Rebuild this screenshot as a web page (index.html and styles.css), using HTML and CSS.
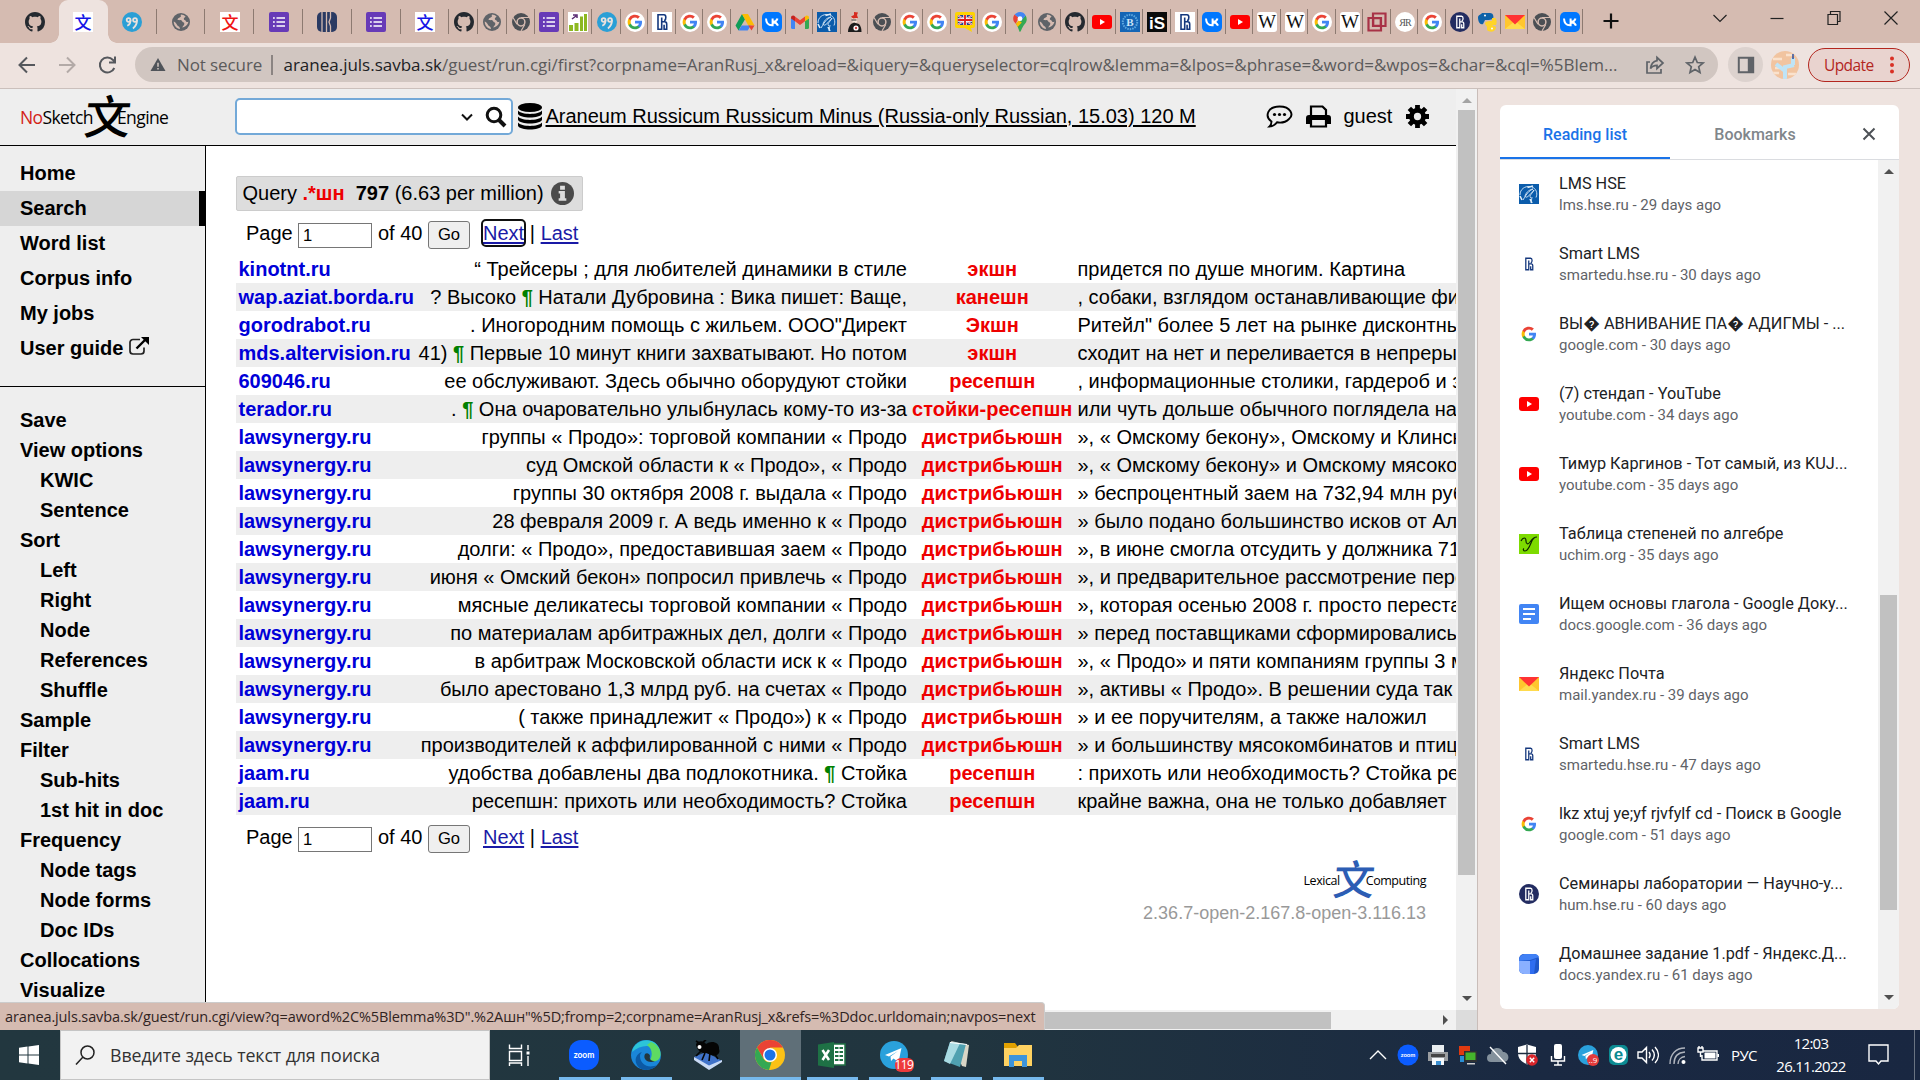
FILE: index.html
```html
<!DOCTYPE html>
<html lang="en">
<head>
<meta charset="utf-8">
<title>Concordance</title>
<link rel="stylesheet" href="styles.css">
</head>
<body>
<svg class="sprite" aria-hidden="true">
  <symbol id="github" viewBox="0 0 16 16"><path fill="#24292f" d="M8 0C3.58 0 0 3.58 0 8c0 3.54 2.29 6.53 5.47 7.59.4.07.55-.17.55-.38 0-.19-.01-.82-.01-1.49-2.01.37-2.53-.49-2.69-.94-.09-.23-.48-.94-.82-1.13-.28-.15-.68-.52-.01-.53.63-.01 1.08.58 1.23.82.72 1.21 1.87.87 2.33.66.07-.52.28-.87.51-1.07-1.78-.2-3.64-.89-3.64-3.95 0-.87.31-1.59.82-2.15-.08-.2-.36-1.02.08-2.12 0 0 .67-.21 2.2.82.64-.18 1.32-.27 2-.27s1.36.09 2 .27c1.53-1.04 2.2-.82 2.2-.82.44 1.1.16 1.92.08 2.12.51.56.82 1.27.82 2.15 0 3.07-1.87 3.75-3.65 3.95.29.25.54.73.54 1.48 0 1.07-.01 1.93-.01 2.2 0 .21.15.46.55.38A8.01 8.01 0 0 0 16 8c0-4.42-3.58-8-8-8z"/></symbol>
  <symbol id="wenblue" viewBox="0 0 20 20"><rect width="20" height="20" fill="#fff"/><text x="10" y="16.5" text-anchor="middle" class="cjk" font-size="17" fill="#1414e6">文</text></symbol>
  <symbol id="wenred" viewBox="0 0 20 20"><rect width="20" height="20" fill="#fff"/><text x="10" y="16.5" text-anchor="middle" class="cjk" font-size="17" fill="#f01414">文</text></symbol>
  <symbol id="quote" viewBox="0 0 20 20"><circle cx="10" cy="10" r="10" fill="#2a9fd6"/><g fill="none" stroke="#e9e1dd" stroke-width="1.8"><circle cx="6.6" cy="8" r="1.9"/><path d="M8.5 8c.2 3-.8 4.6-3.2 5.7"/><circle cx="13" cy="8" r="1.9"/><path d="M14.900 8c.2 4-1.200 6.400-4 8.400"/></g></symbol>
  <symbol id="globe" viewBox="0 0 20 20"><circle cx="10" cy="10" r="9" fill="#5f6368"/><path fill="#d5bbb1" d="M10 2.500c-1 1 .8 1.600-.6 2.600-1.600 1.200-3 1.200-2.800 2.900 1.900.4 4.200-.5 4.700 1.600.3 1.200 2.200.5 2 2.300-.2 1.600-1.600 2-2 3.600 3-.4 5.700-2.700 6.100-6-.9 1-2.300.5-2.600-.6-.4-1.200-2.200-.6-2-2.200.2-1.300 1.400-1.300 1.700-2.500A7.500 7.500 0 0 0 10 2.500zM2.700 9.500c0 3.900 2.700 7 6.300 7.600-.2-1.400-.2-2.300-1.600-2.900-2-.8-1.200-3.200-4.700-4.700z"/></symbol>
  <symbol id="form" viewBox="0 0 20 20"><rect width="20" height="20" rx="2" fill="#673ab7"/><path stroke="#fff" stroke-width="1.700" d="M4 6h1.800M4 10h1.800M4 14h1.800M7.500 6H16M7.500 10H16M7.500 14H16"/></symbol>
  <symbol id="navybars" viewBox="0 0 20 20"><rect width="20" height="20" rx="5" fill="#2a3a63"/><path stroke="#d5bbb1" stroke-width="1.300" fill="none" d="M5 0v20M9.500 0v20M13.500 0v6l-1.500 4 1.500 4v6"/></symbol>
  <symbol id="chrome" viewBox="0 0 20 20"><circle cx="10" cy="10" r="9" fill="#4b4f54"/><circle cx="10" cy="10" r="3.900" fill="#4b4f54" stroke="#d5bbb1" stroke-width="1.500"/><path stroke="#d5bbb1" stroke-width="1.200" d="M10 5.500h8M6 12.300 2 5.500M13.800 12.500 10 19"/></symbol>
  <symbol id="greenbars" viewBox="0 0 20 20"><rect width="20" height="20" fill="#fff"/><path fill="#8db821" d="M1 13h4v6H1zM6.500 11h4v8h-4zM12 4.500h3V19h-3zM16 2h3v17h-3z"/><path stroke="#5a2a72" stroke-width="1.500" fill="none" d="M4 7l4-3M5 3h4v3"/></symbol>
  <symbol id="glogo" viewBox="0 0 48 48"><path fill="#4285f4" d="M45.100 24.500c0-1.600-.1-3.100-.4-4.500H24v8.500h11.800a10 10 0 0 1-4.400 6.600v5.500h7.100c4.200-3.800 6.600-9.500 6.600-16.100z"/><path fill="#34a853" d="M24 46c5.900 0 10.900-2 14.500-5.300l-7.100-5.500c-2 1.300-4.500 2.100-7.400 2.100-5.700 0-10.500-3.900-12.300-9H4.300v5.700A22 22 0 0 0 24 46z"/><path fill="#fbbc05" d="M11.700 28.200a13 13 0 0 1 0-8.400v-5.700H4.300a22 22 0 0 0 0 19.800z"/><path fill="#ea4335" d="M24 10.800c3.200 0 6.100 1.100 8.400 3.300l6.300-6.300A22 22 0 0 0 4.300 14.100l7.400 5.700c1.700-5.200 6.600-9 12.300-9z"/></symbol>
  <symbol id="google" viewBox="0 0 20 20"><circle cx="10" cy="10" r="10" fill="#fff"/><use href="#glogo" x="2" y="2" width="16" height="16"/></symbol>
  <symbol id="rmark" viewBox="0 0 20 20"><path fill="none" stroke="currentColor" stroke-width="1.600" d="M6 18V2.800h6c2.300 0 2.500 4.500.3 6.200M9.700 5.500V17.200H6M9.700 9.800h3c1.500 0 2 1 2 2.500v4.900h-2.600v-4.500"/></symbol>
  <symbol id="hse" viewBox="0 0 20 20"><rect width="20" height="20" fill="#fff"/><use href="#rmark" width="20" height="20" color="#14377d"/></symbol>
  <symbol id="hsecircle" viewBox="0 0 20 20"><circle cx="10" cy="10" r="10" fill="#232c61"/><use href="#rmark" x="2" y="2" width="16" height="16" color="#fff"/></symbol>
  <symbol id="drive" viewBox="0 0 20 20"><path fill="#0f9d58" d="M7 2 .5 13.500 3.500 18.500 10 7.200z"/><path fill="#fbbc04" d="M7 2h6l6.500 11.500h-6.200z"/><path fill="#4285f4" d="M6.700 13.500h9l-3 5h-9.200z"/><path fill="#ea4335" d="M13.300 13.500h6.200l-3 5z"/></symbol>
  <symbol id="vk" viewBox="0 0 20 20"><rect width="20" height="20" rx="5" fill="#07f"/><path fill="none" stroke="#fff" stroke-width="2" d="M4 6.500c.2 4.500 2.500 6.800 6 6.800h.6V6.500M15.500 6.500c-.6 2-2.200 3.300-4.500 3.500 2.600.3 4.200 1.600 5 3.700"/></symbol>
  <symbol id="gmail" viewBox="0 0 20 20"><path fill="#4285f4" d="M1 6v9.500A1.500 1.500 0 0 0 2.500 17H5V9z"/><path fill="#34a853" d="M19 6v9.500a1.500 1.500 0 0 1-1.500 1.500H15V9z"/><path fill="#ea4335" d="M5 4.500 10 8.300l5-3.800v4.800l-5 3.800-5-3.800z"/><path fill="#c5221f" d="M1 6C1 3.500 3.500 2.900 5 4.500v4.800L1 6.500z"/><path fill="#fbbc04" d="M19 6c0-2.500-2.500-3.100-4-1.500v4.800l4-2.800z"/></symbol>
  <symbol id="lms" viewBox="0 0 20 20"><rect width="20" height="20" fill="#0b5cab"/><g fill="none" stroke="#dbeaf7"><path stroke-width=".9" d="M1 11C1 5 6 2 11 2.500M13 3c4 1.500 6 6 4 10.500M4 16c4-7 6-9 10-11-5 1-7 4-8 7 1 3 4 0 9-6-1 3-6 6-3 8M13 13l-1 6"/><path stroke-width="1.600" d="M8.500 3.500 14 2M1 12l2 4M11 15l2 4"/></g></symbol>
  <symbol id="figure" viewBox="0 0 20 20"><path fill="#f6e6da" d="M7 6h5v4l-2 2H8z"/><path fill="#d62b1f" d="M6 4.500 9 3V0l4 .5-1 2.500 1 3-5 .5z"/><path stroke="#333" d="M6.500 8h5"/><path fill="#1c1c1c" d="M6 12l3-1.500 5 1.500c2 2 2.500 5 2.500 8H3c0-3 1-6 3-8z"/><circle cx="11" cy="16" r="2.600" fill="#fff"/><circle cx="11" cy="16" r="1.200" fill="#c44"/></symbol>
  <symbol id="uk" viewBox="0 0 20 20"><path fill="#ffd400" d="M2 0h16a2 2 0 0 1 2 2v12a2 2 0 0 1-2 2h-2l1 4-7-4H2a2 2 0 0 1-2-2V2a2 2 0 0 1 2-2z"/><svg x="2.500" y="3" width="15" height="10" viewBox="0 0 15 10"><path fill="#26408f" d="M0 0h15v10H0z"/><path stroke="#fff" stroke-width="1.700" d="M0 0l15 10M15 0 0 10"/><path stroke="#e02020" stroke-width=".7" d="M0 0l15 10M15 0 0 10"/><path stroke="#fff" stroke-width="3.400" d="M7.500 0v10M0 5h15"/><path stroke="#e02020" stroke-width="1.900" d="M7.500 0v10M0 5h15"/></svg></symbol>
  <symbol id="maps" viewBox="0 0 20 20"><path fill="#34a853" d="M10 20c-.8 0-1.500-5-4.200-8.200L15.700 3.500C17.500 7.500 17 9.500 14 13c-2 2.500-3.300 7-4 7z"/><path fill="#fbbc04" d="m5.800 11.800 3-3.300 3 2-4.200 4.500c-.6-1.300-1.200-2.200-1.800-3.200z"/><path fill="#ea4335" d="M3.200 6.800c0-2 .6-3.200 1.500-4.300L8.500 5.700 5.800 11.800C4.200 10 3.200 9 3.200 6.800z"/><path fill="#4285f4" d="M4.700 2.500C8 -1 13.500-.8 15.700 3.500L11.500 8.500 8.500 5.700z"/><circle cx="10" cy="6.700" r="2.400" fill="#fff"/></symbol>
  <symbol id="youtube" viewBox="0 0 20 20"><rect y="3" width="20" height="14" rx="3" fill="#f00"/><path fill="#fff" d="m8 7 5 3-5 3z"/></symbol>
  <symbol id="bblue" viewBox="0 0 20 20"><rect width="20" height="20" fill="#1565b5"/><circle cx="10" cy="10" r="7.200" fill="none" stroke="#5ea8e0" stroke-width="2" stroke-dasharray="1.500 1"/><text x="10" y="14" text-anchor="middle" font-family="Liberation Serif" font-weight="700" font-size="11" fill="#cfe6f8">B</text></symbol>
  <symbol id="is" viewBox="0 0 20 20"><rect width="20" height="20" fill="#0a0a0a"/><text x="10" y="16.500" text-anchor="middle" font-family="Liberation Sans" font-weight="700" font-size="17" fill="#fff">iS</text></symbol>
  <symbol id="wiki" viewBox="0 0 20 20"><rect width="20" height="20" rx="3" fill="#fff"/><text x="10" y="16" text-anchor="middle" textLength="18" lengthAdjust="spacingAndGlyphs" font-family="Liberation Serif" font-size="18" fill="#111">W</text></symbol>
  <symbol id="redsq" viewBox="0 0 20 20"><g fill="none" stroke="#a83246" stroke-width="2.200"><path d="M6 1.500h12.500V14H6zM1.500 6H14v12.500H1.500z"/><path d="M6.500 6.500h7v7h-7z" stroke-width="1.500"/></g></symbol>
  <symbol id="disc" viewBox="0 0 20 20"><circle cx="10" cy="10" r="10" fill="#fff"/><text x="10" y="13.500" text-anchor="middle" font-family="Liberation Serif" font-size="10" fill="#555" letter-spacing="-1">ЯR</text></symbol>
  <symbol id="python" viewBox="0 0 20 20"><path fill="#0f62a8" d="M1 5c1-3 3-2 4-4h8c3 0 4 3 3 6l-4 1H8l-2 4c-3 1-5-2-5-7z"/><path fill="#ffd42a" d="M15 6h3c2 1 2 5 1 7h-4l4 2c0 5-6 6-9 3v-3l-2-3c0-3 3-3 7-3z"/><circle cx="8" cy="3.500" r="1" fill="#fff"/><circle cx="15" cy="16.500" r="1" fill="#fff"/></symbol>
  <symbol id="ymail" viewBox="0 0 20 20"><path fill="#ffc62e" d="M0 3h20v14H0z"/><path fill="#ffdb4d" d="m0 17 10-8 10 8z"/><path fill="#f33" d="M0 3h20l-10 9.500z"/></symbol>
  <symbol id="uchim" viewBox="0 0 20 20"><rect width="20" height="20" fill="#7ddb00"/><path d="M2 7c2-4 5-4 5 0 0 3 2 4 4 1 2-3 4-5 7-5-3 0-5 3-6 6-2 5-4 8-6 8-2 0-2-2-1-2.500" stroke="#0d2600" stroke-width="1.200" fill="none"/></symbol>
  <symbol id="gdoc" viewBox="0 0 20 20"><rect width="20" height="20" rx="2" fill="#4285f4"/><path stroke="#fff" stroke-width="2" d="M4 5h12M4 10h12M4 15h8"/></symbol>
  <symbol id="ydoc" viewBox="0 0 20 20"><rect width="20" height="20" rx="5" fill="#1f57c9"/><path fill="#4080f5" d="M0 7C0 2 3 0 7 0h8c3 0 4 1 5 3l-9 3z"/><path fill="#2f6df0" d="M11 7l6-2-2 15h-4z"/><path fill="#8ab0ff" d="M0 7h11v13H5a5 5 0 0 1-5-5z"/></symbol>
  <symbol id="tgram" viewBox="0 0 28 28"><circle cx="14" cy="14" r="14" fill="#2aa1dc"/><path fill="#fff" d="m5 14 16.500-7-3 14-5-3.500-2.500 2.500-.5-4.500L18 10l-9 5.500z"/></symbol>
</svg>

<div class="tabstrip">
  <div class="tab nosep"><svg><use href="#github"/></svg></div>
  <div class="tab active nosep"><svg><use href="#wenblue"/></svg></div>
  <div class="tab"><svg><use href="#quote"/></svg></div>
  <div class="tab"><svg><use href="#globe"/></svg></div>
  <div class="tab"><svg><use href="#wenred"/></svg></div>
  <div class="tab"><svg><use href="#form"/></svg></div>
  <div class="tab"><svg><use href="#navybars"/></svg></div>
  <div class="tab"><svg><use href="#form"/></svg></div>
  <div class="tab"><svg><use href="#wenblue"/></svg></div>
  <div class="tab mid"><svg><use href="#github"/></svg></div>
  <div class="tab mid"><svg><use href="#globe"/></svg></div>
  <div class="tab mid"><svg><use href="#chrome"/></svg></div>
  <div class="tab mid"><svg><use href="#form"/></svg></div>
  <div class="tab mid"><svg><use href="#greenbars"/></svg></div>
  <div class="tab mid"><svg><use href="#quote"/></svg></div>
  <div class="tab small"><svg><use href="#google"/></svg></div>
  <div class="tab small"><svg><use href="#hse"/></svg></div>
  <div class="tab small"><svg><use href="#google"/></svg></div>
  <div class="tab small"><svg><use href="#google"/></svg></div>
  <div class="tab small"><svg><use href="#drive"/></svg></div>
  <div class="tab small"><svg><use href="#vk"/></svg></div>
  <div class="tab small"><svg><use href="#gmail"/></svg></div>
  <div class="tab small"><svg><use href="#lms"/></svg></div>
  <div class="tab small"><svg><use href="#figure"/></svg></div>
  <div class="tab small"><svg><use href="#chrome"/></svg></div>
  <div class="tab small"><svg><use href="#google"/></svg></div>
  <div class="tab small"><svg><use href="#google"/></svg></div>
  <div class="tab small"><svg><use href="#uk"/></svg></div>
  <div class="tab small"><svg><use href="#google"/></svg></div>
  <div class="tab small"><svg><use href="#maps"/></svg></div>
  <div class="tab small"><svg><use href="#globe"/></svg></div>
  <div class="tab small"><svg><use href="#github"/></svg></div>
  <div class="tab small"><svg><use href="#youtube"/></svg></div>
  <div class="tab small"><svg><use href="#bblue"/></svg></div>
  <div class="tab small"><svg><use href="#is"/></svg></div>
  <div class="tab small"><svg><use href="#hse"/></svg></div>
  <div class="tab small"><svg><use href="#vk"/></svg></div>
  <div class="tab small"><svg><use href="#youtube"/></svg></div>
  <div class="tab small"><svg><use href="#wiki"/></svg></div>
  <div class="tab small"><svg><use href="#wiki"/></svg></div>
  <div class="tab small"><svg><use href="#google"/></svg></div>
  <div class="tab small"><svg><use href="#wiki"/></svg></div>
  <div class="tab small"><svg><use href="#redsq"/></svg></div>
  <div class="tab small"><svg><use href="#disc"/></svg></div>
  <div class="tab small"><svg><use href="#google"/></svg></div>
  <div class="tab small"><svg><use href="#hsecircle"/></svg></div>
  <div class="tab small"><svg><use href="#python"/></svg></div>
  <div class="tab small"><svg><use href="#ymail"/></svg></div>
  <div class="tab small"><svg><use href="#chrome"/></svg></div>
  <div class="tab small"><svg><use href="#vk"/></svg></div>
  <svg class="newtab" viewBox="0 0 16 16"><path d="M8 .5v15M.5 8h15" stroke="#111" stroke-width="2.200"/></svg>
  <div class="winctl">
    <svg viewBox="0 0 16 16"><path d="m1.500 5 6.500 6.500L14.500 5"/></svg>
    <svg viewBox="0 0 16 16"><path d="M1.500 8.500h13"/></svg>
    <svg viewBox="0 0 16 16"><path d="M2 4.500h9.500v10H2zM4.500 4.500v-3H14v10h-2.500"/></svg>
    <svg viewBox="0 0 16 16"><path d="m1.500 1.500 13 13M14.500 1.500l-13 13"/></svg>
  </div>
</div>

<div class="toolbar">
  <svg class="nav" viewBox="0 0 20 20"><path d="M18 10H3M10 2.500 2.500 10l7.500 7.500" stroke="#55585d"/></svg>
  <svg class="nav" viewBox="0 0 20 20"><path d="M2 10h15M10 2.500l7.500 7.500-7.500 7.500" stroke="#b3aaa7"/></svg>
  <svg class="nav" viewBox="0 0 20 20"><path d="M17.300 13A7.500 7.500 0 1 1 16 5l2 2.500M18 1.500v6h-6" stroke="#55585d"/></svg>
  <div class="omnibox">
    <svg class="warn" viewBox="0 0 16 16"><path fill="#50545a" d="M8 1 16 15H0z"/><path stroke="#d1c6c1" stroke-width="1.600" d="M8 6v4.500M8 11.700v1.600"/></svg>
    <span class="notsecure">Not secure</span>
    <i class="obsep"></i>
    <span class="url"><b>aranea.juls.savba.sk</b>/guest/run.cgi/first?corpname=AranRusj_x&amp;reload=&amp;iquery=&amp;queryselector=cqlrow&amp;lemma=&amp;lpos=&amp;phrase=&amp;word=&amp;wpos=&amp;char=&amp;cql=%5Blem...</span>
    <svg class="obicon share" viewBox="0 0 20 20"><path d="M5 7H2v11h14v-4M12 2.500l6 5.500-6 5.500v-3.200c-3 0-5 .8-6.500 3.200.5-4 2.500-7 6.500-7.800z"/></svg>
    <svg class="obicon" viewBox="0 0 20 20"><path d="m10 2.200 2.300 5.300 5.700.5-4.300 3.700 1.300 5.700-5-3-5 3 1.300-5.700L2 8l5.700-.5z"/></svg>
  </div>
  <div class="sidebtn"><svg viewBox="0 0 20 20"><path fill="none" stroke="#5f6368" stroke-width="2.200" d="M2 2h16v16H2z"/><path fill="#5f6368" d="M12 2h6v16h-6z"/></svg></div>
  <svg class="avatar" viewBox="0 0 28 28"><clipPath id="av"><circle cx="14" cy="14" r="14"/></clipPath><g clip-path="url(#av)"><path fill="#f1c4a0" d="M0 0h28v28H0z"/><path d="M2 8h9M4 17h5M15 4h8M17 23h8M1 22h7" stroke="#fae2cd" stroke-width="2.500"/><path fill="none" stroke="#bfe4f6" stroke-width="4" d="M14 28V16l9-2M14 20l-9-7M22 14V7"/><path stroke="#2b4d9a" stroke-width="1.500" d="M22 3v5"/></g></svg>
  <div class="update"><span>Update</span><svg viewBox="0 0 4 18"><g fill="#d93025"><circle cx="2" cy="2.500" r="2"/><circle cx="2" cy="9" r="2"/><circle cx="2" cy="15.500" r="2"/></g></svg></div>
</div>

<div class="content">
  <div class="web">
    <div class="viewport">
      <div class="page">
        <header class="head">
          <div class="logo"><span class="name"><span class="no">No</span>Sketch</span><span class="wen">文</span><span>Engine</span></div>
          <div class="searchbox">
            <svg class="chev" viewBox="0 0 12 8"><path d="m1 1.500 5 5 5-5" fill="none" stroke="#111" stroke-width="2"/></svg>
            <svg class="mag" viewBox="0 0 22 22"><circle cx="9" cy="9" r="6.800" fill="none" stroke="#111" stroke-width="3"/><path d="m14 14 6 6" stroke="#111" stroke-width="4"/></svg>
          </div>
          <svg class="db" viewBox="0 0 24 27"><ellipse cx="12" cy="4.500" rx="12" ry="4.500"/><path d="M0 7.500c3 4.500 21 4.500 24 0v3.200c-2 5-22 5-24 0zM0 13.500c3 4.500 21 4.500 24 0v3.200c-2 5-22 5-24 0zM0 19.500c3 4.500 21 4.500 24 0v3.200c-2 5-22 5-24 0z"/></svg>
          <a class="corpus">Araneum Russicum Russicum Minus (Russia-only Russian, 15.03) 120 M</a>
          <svg class="chat" viewBox="0 0 27 23"><path fill="none" stroke="#000" stroke-width="1.900" d="M5.500 16.500C-2 11 2 1.500 13.500 1.500S28 10 23 14c-3 3-8 4-12 3.300C9 20 6 21.500 3.500 21.500c1.700-1.500 2-3 2-5z"/><circle cx="8.500" cy="9.500" r="1.600"/><circle cx="13.500" cy="9.500" r="1.600"/><circle cx="18.500" cy="9.500" r="1.600"/></svg>
          <svg class="printer" viewBox="0 0 25 23"><path fill="none" stroke="#000" stroke-width="2.200" d="M5 11V1.500h11.500L20 5v6M5 15v6.500h15V15"/><path d="M3 10h19a3 3 0 0 1 3 3v6h-4v-4H4v4H0v-6a3 3 0 0 1 3-3z"/></svg>
          <span class="guest">guest</span>
          <svg class="gear" viewBox="0 0 24 24"><circle cx="12" cy="12" r="6.300" fill="none" stroke="#000" stroke-width="5"/><path stroke="#000" stroke-width="5" d="M12 0v5M12 19v5M0 12h5M19 12h5M3.500 3.500 7 7M17 17l3.500 3.500M20.500 3.500 17 7M7 17l-3.500 3.500"/></svg>
        </header>
        <div class="cols">
          <nav class="side">
            <div class="top">
              <a>Home</a><a class="cur">Search</a><a>Word list</a><a>Corpus info</a><a>My jobs</a>
              <a>User guide <svg viewBox="0 0 20 18"><path fill="none" stroke="#222" stroke-width="1.700" d="M11 2.500H4a3 3 0 0 0-3 3V14a3 3 0 0 0 3 3h8a3 3 0 0 0 3-3v-3.500"/><path stroke="#000" stroke-width="2.400" d="m7.500 11.500 9-9"/><path d="M12 0h8v8z"/></svg></a>
            </div>
            <div class="menu">
              <a>Save</a><a>View options</a><a class="sub">KWIC</a><a class="sub">Sentence</a><a>Sort</a><a class="sub">Left</a><a class="sub">Right</a><a class="sub">Node</a><a class="sub">References</a><a class="sub">Shuffle</a><a>Sample</a><a>Filter</a><a class="sub">Sub-hits</a><a class="sub">1st hit in doc</a><a>Frequency</a><a class="sub">Node tags</a><a class="sub">Node forms</a><a class="sub">Doc IDs</a><a>Collocations</a><a>Visualize</a>
            </div>
          </nav>
          <main>
            <div class="query"><span>Query <b class="red">.*шн</b>&nbsp; <b>797</b> (6.63 per million)</span><svg viewBox="0 0 24 24"><circle cx="12" cy="12" r="12" fill="#4a4a4a"/><path fill="#ddd" d="M9.500 4h5v4h-5zM8 9.500h6.500V17H16v2.500H8V17h1.500v-5H8z"/></svg></div>
            <div class="pager"><span class="pg">Page</span><span class="inp">1</span><span class="of">of 40</span><span class="go">Go</span><a class="focus">Next</a><span class="bar">|</span><a>Last</a></div>
            <div class="rows">
              <div class="row"><b>kinotnt.ru</b><span>“ Трейсеры ; для любителей динамики в стиле</span><strong>экшн</strong><span>придется по душе многим. Картина</span></div>
              <div class="row"><b>wap.aziat.borda.ru</b><span>? Высоко <i>¶</i> Натали Дубровина : Вика пишет: Ваще,</span><strong>канешн</strong><span>, собаки, взглядом останавливающие физ</span></div>
              <div class="row"><b>gorodrabot.ru</b><span>. Иногородним помощь с жильем. ООО"Директ</span><strong>Экшн</strong><span>Ритейл" более 5 лет на рынке дисконтных</span></div>
              <div class="row"><b>mds.altervision.ru</b><span>41) <i>¶</i> Первые 10 минут книги захватывают. Но потом</span><strong>экшн</strong><span>сходит на нет и переливается в непрерыв</span></div>
              <div class="row"><b>609046.ru</b><span>ее обслуживают. Здесь обычно оборудуют стойки</span><strong>ресепшн</strong><span>, информационные столики, гардероб и зо</span></div>
              <div class="row"><b>terador.ru</b><span>. <i>¶</i> Она очаровательно улыбнулась кому-то из-за</span><strong>стойки-ресепшн</strong><span>или чуть дольше обычного поглядела на</span></div>
              <div class="row"><b>lawsynergy.ru</b><span>группы « Продо»: торговой компании « Продо</span><strong>дистрибьюшн</strong><span>», « Омскому бекону», Омскому и Клинско</span></div>
              <div class="row"><b>lawsynergy.ru</b><span>суд Омской области к « Продо», « Продо</span><strong>дистрибьюшн</strong><span>», « Омскому бекону» и Омскому мясоком</span></div>
              <div class="row"><b>lawsynergy.ru</b><span>группы 30 октября 2008 г. выдала « Продо</span><strong>дистрибьюшн</strong><span>» беспроцентный заем на 732,94 млн руб.</span></div>
              <div class="row"><b>lawsynergy.ru</b><span>28 февраля 2009 г. А ведь именно к « Продо</span><strong>дистрибьюшн</strong><span>» было подано большинство исков от Аль</span></div>
              <div class="row"><b>lawsynergy.ru</b><span>долги: « Продо», предоставившая заем « Продо</span><strong>дистрибьюшн</strong><span>», в июне смогла отсудить у должника 71,</span></div>
              <div class="row"><b>lawsynergy.ru</b><span>июня « Омский бекон» попросил привлечь « Продо</span><strong>дистрибьюшн</strong><span>», и предварительное рассмотрение пере</span></div>
              <div class="row"><b>lawsynergy.ru</b><span>мясные деликатесы торговой компании « Продо</span><strong>дистрибьюшн</strong><span>», которая осенью 2008 г. просто перестал</span></div>
              <div class="row"><b>lawsynergy.ru</b><span>по материалам арбитражных дел, долги « Продо</span><strong>дистрибьюшн</strong><span>» перед поставщиками сформировались</span></div>
              <div class="row"><b>lawsynergy.ru</b><span>в арбитраж Московской области иск к « Продо</span><strong>дистрибьюшн</strong><span>», « Продо» и пяти компаниям группы 3 мл</span></div>
              <div class="row"><b>lawsynergy.ru</b><span>было арестовано 1,3 млрд руб. на счетах « Продо</span><strong>дистрибьюшн</strong><span>», активы « Продо». В решении суда так</span></div>
              <div class="row"><b>lawsynergy.ru</b><span>( также принадлежит « Продо») к « Продо</span><strong>дистрибьюшн</strong><span>» и ее поручителям, а также наложил</span></div>
              <div class="row"><b>lawsynergy.ru</b><span>производителей к аффилированной с ними « Продо</span><strong>дистрибьюшн</strong><span>» и большинству мясокомбинатов и птице</span></div>
              <div class="row"><b>jaam.ru</b><span>удобства добавлены два подлокотника. <i>¶</i> Стойка</span><strong>ресепшн</strong><span>: прихоть или необходимость? Стойка рес</span></div>
              <div class="row"><b>jaam.ru</b><span>ресепшн: прихоть или необходимость? Стойка</span><strong>ресепшн</strong><span>крайне важна, она не только добавляет</span></div>
            </div>
            <div class="pager bottom"><span class="pg">Page</span><span class="inp">1</span><span class="of">of 40</span><span class="go">Go</span><a>Next</a><span class="bar">|</span><a>Last</a></div>
            <footer>
              <div class="lex"><span>Lexical</span><span class="wen">文</span><span>Computing</span></div>
              <div class="ver">2.36.7-open-2.167.8-open-3.116.13</div>
            </footer>
          </main>
        </div>
      </div>
      <div class="vscroll"><i class="up dim"></i><i class="thumb"></i><i class="down"></i></div>
    </div>
    <div class="hscroll"><i class="hthumb"></i><i class="right"></i><i class="corner"></i></div>
    <div class="status">aranea.juls.savba.sk/guest/run.cgi/view?q=aword%2C%5Blemma%3D".%2Aшн"%5D;fromp=2;corpname=AranRusj_x&amp;refs=%3Ddoc.urldomain;navpos=next</div>
  </div>

  <aside class="panel">
    <div class="ptabs"><span class="on">Reading list</span><span>Bookmarks</span><svg viewBox="0 0 14 14"><path d="m1.500 1.500 11 11M12.500 1.500l-11 11" stroke="#4d5156" stroke-width="2"/></svg></div>
    <div class="pbody">
      <div class="list">
        <div class="item"><svg><use href="#lms"/></svg><div><p>LMS HSE</p><small>lms.hse.ru - 29 days ago</small></div></div>
        <div class="item"><svg><use href="#rmark" x="2" y="2" width="16" height="16" color="#14377d"/></svg><div><p>Smart LMS</p><small>smartedu.hse.ru - 30 days ago</small></div></div>
        <div class="item"><svg><use href="#google"/></svg><div><p>ВЫ� АВНИВАНИЕ ПА� АДИГМЫ - ...</p><small>google.com - 30 days ago</small></div></div>
        <div class="item"><svg><use href="#youtube"/></svg><div><p>(7) стендап - YouTube</p><small>youtube.com - 34 days ago</small></div></div>
        <div class="item"><svg><use href="#youtube"/></svg><div><p>Тимур Каргинов - Тот самый, из KUJ...</p><small>youtube.com - 35 days ago</small></div></div>
        <div class="item"><svg><use href="#uchim"/></svg><div><p>Таблица степеней по алгебре</p><small>uchim.org - 35 days ago</small></div></div>
        <div class="item"><svg><use href="#gdoc"/></svg><div><p>Ищем основы глагола - Google Доку...</p><small>docs.google.com - 36 days ago</small></div></div>
        <div class="item"><svg><use href="#ymail"/></svg><div><p>Яндекс Почта</p><small>mail.yandex.ru - 39 days ago</small></div></div>
        <div class="item"><svg><use href="#rmark" x="2" y="2" width="16" height="16" color="#14377d"/></svg><div><p>Smart LMS</p><small>smartedu.hse.ru - 47 days ago</small></div></div>
        <div class="item"><svg><use href="#google"/></svg><div><p>lkz xtuj ye;yf rjvfylf cd - Поиск в Google</p><small>google.com - 51 days ago</small></div></div>
        <div class="item"><svg><use href="#hsecircle"/></svg><div><p>Семинары лаборатории — Научно-у...</p><small>hum.hse.ru - 60 days ago</small></div></div>
        <div class="item"><svg><use href="#ydoc"/></svg><div><p>Домашнее задание 1.pdf - Яндекс.Д...</p><small>docs.yandex.ru - 61 days ago</small></div></div>
      </div>
      <div class="pscroll"><i class="up"></i><i class="thumb"></i><i class="down"></i></div>
    </div>
  </aside>
</div>

<div class="taskbar">
  <div class="start"><svg viewBox="0 0 20 20"><path fill="#fff" d="M0 2.800 8.500 1.600v8H0zM9.500 1.500 20 0v9.600H9.500zM0 10.500h8.500v8L0 17.300zM9.500 10.500H20V20L9.500 18.600z"/></svg></div>
  <div class="tsearch"><svg viewBox="0 0 20 20"><circle cx="12.500" cy="7.500" r="6.500" fill="none" stroke="#222" stroke-width="1.500"/><path d="M8 12 1 19.500" stroke="#222" stroke-width="1.500"/></svg><span>Введите здесь текст для поиска</span></div>
  <div class="apps">
    <div class="app none"><svg viewBox="0 0 30 30"><path fill="none" stroke="#fff" stroke-width="1.400" d="M5.500 4.500v4h12v-4M5.500 11.500h12v9h-12zM5.500 26v-3h12v3M24 5v5M24 16v10"/><path fill="#fff" d="M22.500 11.500h3v3h-3z"/></svg></div>
    <div class="app"><svg viewBox="0 0 30 30"><rect width="30" height="30" rx="12" fill="#0b5cff"/><text x="15" y="17.500" text-anchor="middle" font-family="Lato" font-weight="700" font-size="8.500" fill="#fff">zoom</text></svg></div>
    <div class="app"><svg viewBox="0 0 30 30"><circle cx="15" cy="15" r="15" fill="#1a86d9"/><path fill="#2cc4d8" d="M1 12C4-3 27-4 29 12c-7-8-19-8-28 0z"/><path fill="#5edb62" d="M20 2c8 3 12 11 8 17-2 3-8 3-9 1 3-5 2-12-3-15z"/><path fill="#0c59a4" d="M9 16c0 8 8 13 17 9-6 7-17 6-20 0-3-5-1-11 5-13-1 1-2 2-2 4z"/><path fill="#22363f" d="M14 14c2-2 5 0 5 2-1 3 1 5 5 5-5 3-13-1-10-7z"/></svg></div>
    <div class="app none"><svg viewBox="0 0 30 30"><path fill="#3f72c9" d="m1 17 12-5 16 9-12 8z"/><path fill="#c9daf5" d="m1 17 15 8.500L29 20v2l-13 8L1 20z"/><path fill="#050505" d="M3 4c3-4 8-3 10 0 5-4 14-2 13 5 2 5-3 8-8 6l-5-2c-5 1-10-4-10-9z"/><path fill="none" stroke="#050505" stroke-width="1.600" d="m8 11-5 5M12 13l-3 7M17 13l-1 8M21 13l4 6M6 3 3 1M10 2l3-2"/><circle cx="6.500" cy="7" r="2" fill="#fff"/></svg></div>
    <div class="app hot"><svg viewBox="0 0 30 30"><circle cx="15" cy="15" r="15" fill="#fbc116"/><path fill="#ea4335" d="M2 7.500A15 15 0 0 1 28 7.500H15L8.500 18.500z"/><path fill="#34a853" d="M2 7.500 8.500 18.700c2 3.500 5 3.800 8 3.600L14 30A15 15 0 0 1 2 7.500z"/><circle cx="15" cy="15" r="7" fill="#fff"/><circle cx="15" cy="15" r="5.500" fill="#1a73e8"/></svg></div>
    <div class="app"><svg viewBox="0 0 30 30"><path fill="#fff" stroke="#1f7244" stroke-width="1.500" d="M15 4h13v21H15z"/><path stroke="#1f7244" stroke-width="2" d="M18 8h8M18 12h8M18 16h8M18 20h8" stroke-dasharray="3.500 1"/><path fill="#1e7145" d="M1 4.500 17 2v26L1 25.500z"/><path stroke="#fff" stroke-width="2.500" d="m5.500 10 6.500 10M12 10 5.500 20"/></svg></div>
    <div class="app"><svg viewBox="0 0 30 30"><use href="#tgram" x="1" y="1" width="28" height="28"/></svg><em>119</em></div>
    <div class="app"><svg viewBox="0 0 30 30"><path fill="#d9d6c6" d="m10 1 18 4-3 22-4-1z"/><path fill="#4fa0b0" d="m9 2 16 2-6 23-16-6z"/><path fill="#a9dbe3" d="m9 2 10 1.300L9 24l-6-3z"/><path fill="none" stroke="#fff" d="M9 2.500 26 4.500"/></svg></div>
    <div class="app"><svg viewBox="0 0 30 30"><path fill="#e2a100" d="M1 3h11l3 4v4H1z"/><path fill="#ffd261" d="M1 8h12l3-3h13v21H1z"/><path fill="#3d94db" d="M6 15h18v12h-5v-6h-8v6H6z"/></svg></div>
  </div>
  <div class="tray">
    <svg viewBox="0 0 22 22"><path d="m3 15 8-8 8 8" class="w"/></svg>
    <svg viewBox="0 0 22 22"><circle cx="11" cy="11" r="10.500" fill="#0b5cff"/><text x="11" y="13" text-anchor="middle" font-family="Lato" font-weight="700" font-size="6" fill="#fff">zoom</text></svg>
    <svg viewBox="0 0 22 22"><path fill="#e9edf0" d="M5 1h12v8H5z"/><path fill="#9a9da0" d="M1 8h20v9H1z"/><path fill="#444" d="M4 10h14v3H4z"/><path fill="#f5f8fa" d="M5 14h12v7H5z"/><path fill="#3b8fd0" d="M9 17h5v4H9z"/></svg>
    <svg viewBox="0 0 22 22"><path fill="#e03a10" d="M2 2h11v9H2z"/><path fill="#2a8fd6" d="M3 12h5v6H3z"/><path fill="#2d3033" d="M7 7h13v11H7z"/><path fill="#45b52c" d="M8.500 8.500h10V16h-10z"/><path fill="#ccc" d="M10 19h8v1.500h-8z"/></svg>
    <svg viewBox="0 0 22 22"><path fill="#84919c" d="M4 18a4 4 0 0 1 0-8c0-7 10-8 12-2 7 0 7 10 1 10z"/><path d="m3 3 16 17" class="w"/></svg>
    <svg viewBox="0 0 22 22"><path fill="#fff" d="m10 .5 9 2.500v6c0 6-4 9-9 11.500C5 18 1 15 1 9V3z"/><path d="M10 1v19M1 9.500h18" stroke="#1c2c3f" stroke-width="1.300"/><circle cx="15" cy="16" r="5.800" fill="#d9252a"/><path d="m12.800 13.800 4.400 4.400m0-4.400-4.400 4.400" class="w"/></svg>
    <svg viewBox="0 0 22 22"><rect x="7" width="8" height="15" rx="2" fill="#fff"/><path d="M4.500 12v5h13v-5M11 17v4M7 21h8" class="w"/></svg>
    <svg viewBox="0 0 22 22"><use href="#tgram" x="1" y="1" width="20" height="20"/><circle cx="16" cy="16" r="6" fill="#e33b3b"/><text x="16" y="19" text-anchor="middle" font-family="Open Sans" font-size="8" fill="#fff">..9</text></svg>
    <svg viewBox="0 0 22 22"><rect x="2" y="1" width="19" height="20" rx="5" fill="#0c8b93"/><circle cx="11.500" cy="11" r="8" fill="#fff"/><text x="11.500" y="16.300" text-anchor="middle" font-family="Liberation Sans" font-weight="700" font-size="17" fill="#0c8b93">e</text></svg>
    <svg viewBox="0 0 22 22"><path d="M1 8h4l4.500-4.500v15L5 14H1zM12 8c1.500 2 1.500 4 0 6M15 5.500c3 3.500 3 7.500 0 11M18 3c4.500 5 4.500 11 0 16" class="w"/></svg>
    <svg viewBox="0 0 22 22"><path d="M3 20C3 10 9 4 18 4M7 20c0-7 4-11.500 11-12M11 20c0-4 3-7 7-7.500" class="w" opacity=".65"/><circle cx="16.500" cy="18" r="2" fill="#fff"/></svg>
    <svg viewBox="0 0 22 22"><path d="M6 7h14v9H5v-5M1 4h5v4H1zM2 2v2M5 2v2M3.500 8v5M21.500 10v3" class="w"/><path fill="#fff" d="M7.500 8.500h11v6h-11z"/></svg>
    <span class="lang">РУС</span>
    <div class="clock"><span>12:03</span><span>26.11.2022</span></div>
    <svg class="note" viewBox="0 0 22 22"><path d="M1 1h19v16h-7l-2.500 3L8 17H1z" class="w"/></svg>
    <i class="peek"></i>
  </div>
</div>
</body>
</html>
```
FILE: styles.css
```css
* { box-sizing: border-box; }
html, body { margin: 0; height: 100%; overflow: hidden; }
body { width: 1920px; height: 1080px; display: flex; flex-direction: column; background: #eee3df; font-family: "Liberation Sans", Arial, sans-serif; color: #000; }
p { margin: 0; }
svg { display: block; flex: none; }
.sprite { display: none; }
.cjk { font-family: "Noto Sans CJK SC", sans-serif; font-weight: 500; }

/* tab strip */
.tabstrip { height: 43px; flex: none; display: flex; background: #d5bbb1; padding-left: 10.2px; }
.tab { width: 48.8px; flex: none; display: flex; align-items: center; justify-content: center; background: linear-gradient(#8d7a71, #8d7a71) right 9px / 1px 25px no-repeat; }
.tab svg { width: 20px; height: 20px; }
.tab.mid { width: 28.6px; }
.tab.small { width: 27.5px; }
.tab.nosep { background: none; }
.tab.active { background: #eee3df; border-radius: 9px 9px 0 0; position: relative; }
.tab.active::before, .tab.active::after { content: ""; position: absolute; bottom: 0; width: 9px; height: 9px; }
.tab.active::before { left: -9px; background: radial-gradient(circle at 0 0, transparent 8.5px, #eee3df 9px); }
.tab.active::after { right: -9px; background: radial-gradient(circle at 100% 0, transparent 8.5px, #eee3df 9px); }
.newtab { width: 16px; height: 16px; margin: 13px 0 0 20px; }
.winctl { display: flex; gap: 41px; margin: 10px 0 0 93px; }
.winctl svg { width: 16px; height: 16px; fill: none; stroke: #222; stroke-width: 1.2; }

/* toolbar */
.toolbar { height: 46px; flex: none; display: flex; align-items: center; padding: 0 10px 2px 17px; border-bottom: 1px solid #cbc0bc; }
.toolbar .nav { width: 20px; height: 20px; fill: none; stroke-width: 2; margin-right: 20px; }
.omnibox { width: 1583px; height: 35px; margin-left: -2px; border-radius: 18px; background: #d1c6c1; display: flex; align-items: center; padding-left: 15px; font: 17px "Open Sans", "Noto Sans", sans-serif; color: #5b5a5b; white-space: nowrap; }
.warn { width: 16px; height: 15px; margin-right: 11px; }
.notsecure { width: 83px; letter-spacing: -.1px; }
.obsep { width: 1.500px; height: 20px; background: #8b8482; margin: 0 11px 0 11px; }
.url { width: 1350px; letter-spacing: -.012px; }
.url b { font-weight: 400; color: #202124; }
.obicon { width: 20px; height: 20px; fill: none; stroke: #5f6368; stroke-width: 1.700; }
.share { margin: 0 20px 0 11px; }
.sidebtn { width: 35px; height: 35px; border-radius: 50%; background: #dcd2ce; margin-left: 10px; display: flex; align-items: center; justify-content: center; }
.sidebtn svg { width: 18px; height: 18px; }
.avatar { width: 28px; height: 28px; margin: 0 9px 0 8px; }
.update { width: 102px; height: 34px; border: 1.500px solid #b3261e; border-radius: 17px; background: #e9d3cf; display: flex; align-items: center; justify-content: space-between; padding: 0 15px 0 15px; color: #b3261e; font: 15.500px "Open Sans", sans-serif; letter-spacing: -.6px; }
.update svg { width: 4px; height: 18px; }

.content { height: 941px; flex: none; display: flex; }
.web { width: 1478px; flex: none; display: flex; flex-direction: column; border-right: 1px solid #c9bdb9; position: relative; }
.viewport { height: 921px; flex: none; display: flex; }
.page { width: 1456px; flex: none; background: #fff; overflow: hidden; display: flex; flex-direction: column; }

/* scrollbars */
.vscroll, .pscroll { width: 21px; background: #f1f1f1; display: flex; flex-direction: column; align-items: center; }
.up, .down { width: 0; border: 5px solid transparent; flex: none; }
.up { border-bottom-color: #505050; border-top: 0; }
.down { border-top-color: #505050; border-bottom: 0; }
.dim { border-bottom-color: #a3a3a3; }
.thumb { width: 17px; background: #c1c1c1; }
.vscroll .up { margin: 9px 0 7px; }
.vscroll .thumb { height: 765px; }
.vscroll .down { margin-top: 121px; }
.hscroll { height: 20px; background: #f1f1f1; display: flex; align-items: center; }
.hthumb { width: 1331px; height: 17px; background: #c1c1c1; }
.right { border: 5px solid transparent; border-left-color: #505050; border-right: 0; margin: 0 8px 0 112px; }
.corner { flex: 1; height: 20px; background: #dcdcdc; }
.status { position: absolute; left: 0; bottom: 0; width: 1045px; height: 28px; background: #d5bbb1; border-top: 1px solid #ccc; border-right: 1px solid #ccc; border-radius: 0 4px 0 0; padding-left: 5px; font: 14.500px/27px "Open Sans", sans-serif; letter-spacing: -.125px; color: #30231f; white-space: nowrap; }

/* page header */
.head { height: 57px; flex: none; background: #eee; border-bottom: 1px solid #000; display: flex; align-items: center; padding-bottom: 1px; font-size: 20px; }
.logo { width: 215px; padding-left: 20px; display: flex; align-items: center; font: 17.500px "Open Sans", sans-serif; letter-spacing: -.6px; }
.logo .name { width: 72px; }
.logo .no { color: #d32216; }
.logo .wen { font: 500 46px/42px "Noto Sans CJK SC", sans-serif; width: 25px; margin: -6px 0 0 0; text-indent: -7px; transform: skewX(-6deg); }
.searchbox { width: 278px; height: 37px; margin: 0 5px 0 20px; border: 2px solid #73a9d8; border-radius: 5px; background: #fff; display: flex; align-items: center; justify-content: flex-end; padding-right: 4px; }
.chev { width: 12px; height: 8px; margin-right: 12px; }
.mag { width: 22px; height: 22px; }
.db { width: 24px; height: 27px; margin-right: 3.500px; }
.corpus { text-decoration: underline; text-underline-offset: 2px; width: 720px; white-space: nowrap; }
.chat { width: 27px; height: 23px; margin-right: 13px; }
.printer { width: 25px; height: 23px; margin-right: 13px; }
.guest { width: 62px; }
.gear { width: 23px; height: 23px; }

/* left menu */
.cols { flex: 1; display: flex; min-height: 0; }
.side { width: 206px; flex: none; background: #eee; border-right: 1px solid #000; font-size: 20px; font-weight: 700; }
.side a { display: block; padding-left: 20px; white-space: nowrap; }
.top { height: 241px; padding-top: 10px; border-bottom: 1px solid #000; }
.top a { height: 35px; line-height: 35px; }
.top .cur { background: #d6d6d6; border-right: 6px solid #000; }
.top svg { display: inline-block; width: 20px; height: 18px; }
.menu { padding-top: 18px; }
.menu a { height: 30px; line-height: 30px; }
.menu .sub { padding-left: 40px; }

/* concordance */
main { flex: 1; min-width: 0; padding: 30px 0 0 30px; font-size: 20px; }
.query { width: 347px; height: 35px; background: #ddd; border: 1px solid #ccc; border-radius: 2px; display: flex; align-items: center; justify-content: space-between; padding: 0 8px 1px 5.500px; white-space: nowrap; }
.query svg { width: 23px; height: 23px; }
.red { color: #e00; }
.pager { height: 44px; display: flex; align-items: flex-start; padding: 10px 0 0 10px; line-height: 24px; }
.pg { width: 52px; }
.inp { width: 74px; height: 25px; border: 1px solid #767676; background: #fff; margin: 2px 6px 0 0; padding-left: 4px; font-size: 16.600px; line-height: 23px; }
.of { width: 50px; }
.go { width: 42px; height: 28px; border: 1px solid #767676; border-radius: 3px; background: #efefef; text-align: center; font-size: 16.600px; line-height: 26px; margin-right: 13px; }
.pager a { color: #1a1aa6; text-decoration: underline; text-underline-offset: 2px; }
.pager .focus { outline: 2px solid #101010; outline-offset: 0; border-radius: 3px; }
.bar { width: 16.500px; text-align: center; }
.bottom { height: 44px; padding-top: 9.500px; }
.row { height: 28px; line-height: 28px; display: grid; grid-template-columns: 180px 491px 170.500px 1fr; white-space: nowrap; }
.row:nth-child(even) { background: #eee; }
.row b { color: #0000d8; padding-left: 2.500px; }
.row span:nth-child(2) { text-align: right; }
.row strong { text-align: center; color: #e00; }
.row span:last-child { overflow: hidden; }
.row i { font-style: normal; font-weight: 700; color: green; }
footer { width: 1190px; display: flex; flex-direction: column; align-items: flex-end; }
.lex { height: 42px; display: flex; align-items: center; font: 12.500px "Open Sans", sans-serif; letter-spacing: -.45px; }
.lex .wen { font: 500 41px/42px "Noto Sans CJK SC", sans-serif; width: 26px; text-indent: -6px; margin-top: -7px; color: #2c5db4; transform: skewX(-6deg); }
.ver { font-size: 18px; line-height: 24px; color: #999; }

/* side panel */
.panel { width: 399px; height: 904px; margin: 16px 0 0 22px; background: #fff; border-radius: 6px; overflow: hidden; font-family: Roboto, sans-serif; }
.ptabs { height: 55px; display: flex; align-items: center; border-bottom: 1px solid #dadce0; font-size: 16px; font-weight: 500; color: #80868b; }
.ptabs span { width: 170px; height: 54px; line-height: 60px; text-align: center; }
.ptabs .on { color: #1a73e8; border-bottom: 2px solid #1a73e8; }
.ptabs svg { width: 14px; height: 14px; margin: 4px 0 0 22px; }
.pbody { height: 849px; display: flex; }
.list { width: 378px; }
.item { height: 70px; padding-left: 19px; display: flex; align-items: center; gap: 20px; }
.item svg { width: 20px; height: 20px; }
.item div { padding-top: 1px; }
.item p { font-size: 16.250px; line-height: 21px; color: #202124; white-space: nowrap; }
.item small { display: block; font-size: 15px; line-height: 22px; color: #5f6368; }
.list .item:first-child { margin-top: -1px; }
.pscroll .up { margin: 9px 0 0; }
.pscroll .thumb { height: 315px; margin: 421px 0 85px; }

/* taskbar */
.taskbar { height: 50px; flex: none; display: flex; background: linear-gradient(90deg, #22373f 0%, #21353f 50%, #1a2942 80%, #192741 100%); color: #fff; font-family: "Open Sans", "Noto Sans", sans-serif; }
.start { width: 60px; padding: 15px 0 0 19px; }
.start svg { width: 20px; height: 20px; }
.tsearch { width: 430px; background: #f2f2f2; border: 1px solid #c5c5c5; display: flex; align-items: center; gap: 15px; padding-left: 14px; color: #333; font-size: 17.800px; white-space: nowrap; }
.tsearch svg { width: 20px; height: 20px; }
.tsearch span { letter-spacing: -.1px; }
.apps { display: flex; width: 860px; }
.app { width: 51px; margin: 0 5.500px; flex: none; display: flex; align-items: center; justify-content: center; border-bottom: 3px solid #76b9ed; padding-top: 3px; position: relative; }
.app.none { border-color: transparent; }
.app:first-child { margin: 0 8.500px 0 3.500px; }
.app.hot { width: 61px; margin: 0 .5px; background: #5f6f78; }
.app svg { width: 30px; height: 30px; }
.app em { position: absolute; left: 26px; top: 28px; width: 19px; height: 14px; border-radius: 6px; background: #ee3b3b; font: 12px/14px "Open Sans", sans-serif; letter-spacing: -.6px; text-align: center; }
.tray { display: flex; align-items: center; margin-left: 17px; }
.tray svg { width: 22px; height: 22px; margin-right: 8px; }
.w { fill: none; stroke: #fff; stroke-width: 1.4; }
.lang { width: 42px; margin-left: 4px; font-size: 15px; letter-spacing: -.6px; }
.clock { width: 76px; display: flex; flex-direction: column; text-align: center; font-size: 15px; line-height: 23px; letter-spacing: -.7px; margin-right: 19px; }
.tray .note { margin: 0 24px 0 0; }
.peek { width: 1px; height: 50px; background: #6a7482; }
```
